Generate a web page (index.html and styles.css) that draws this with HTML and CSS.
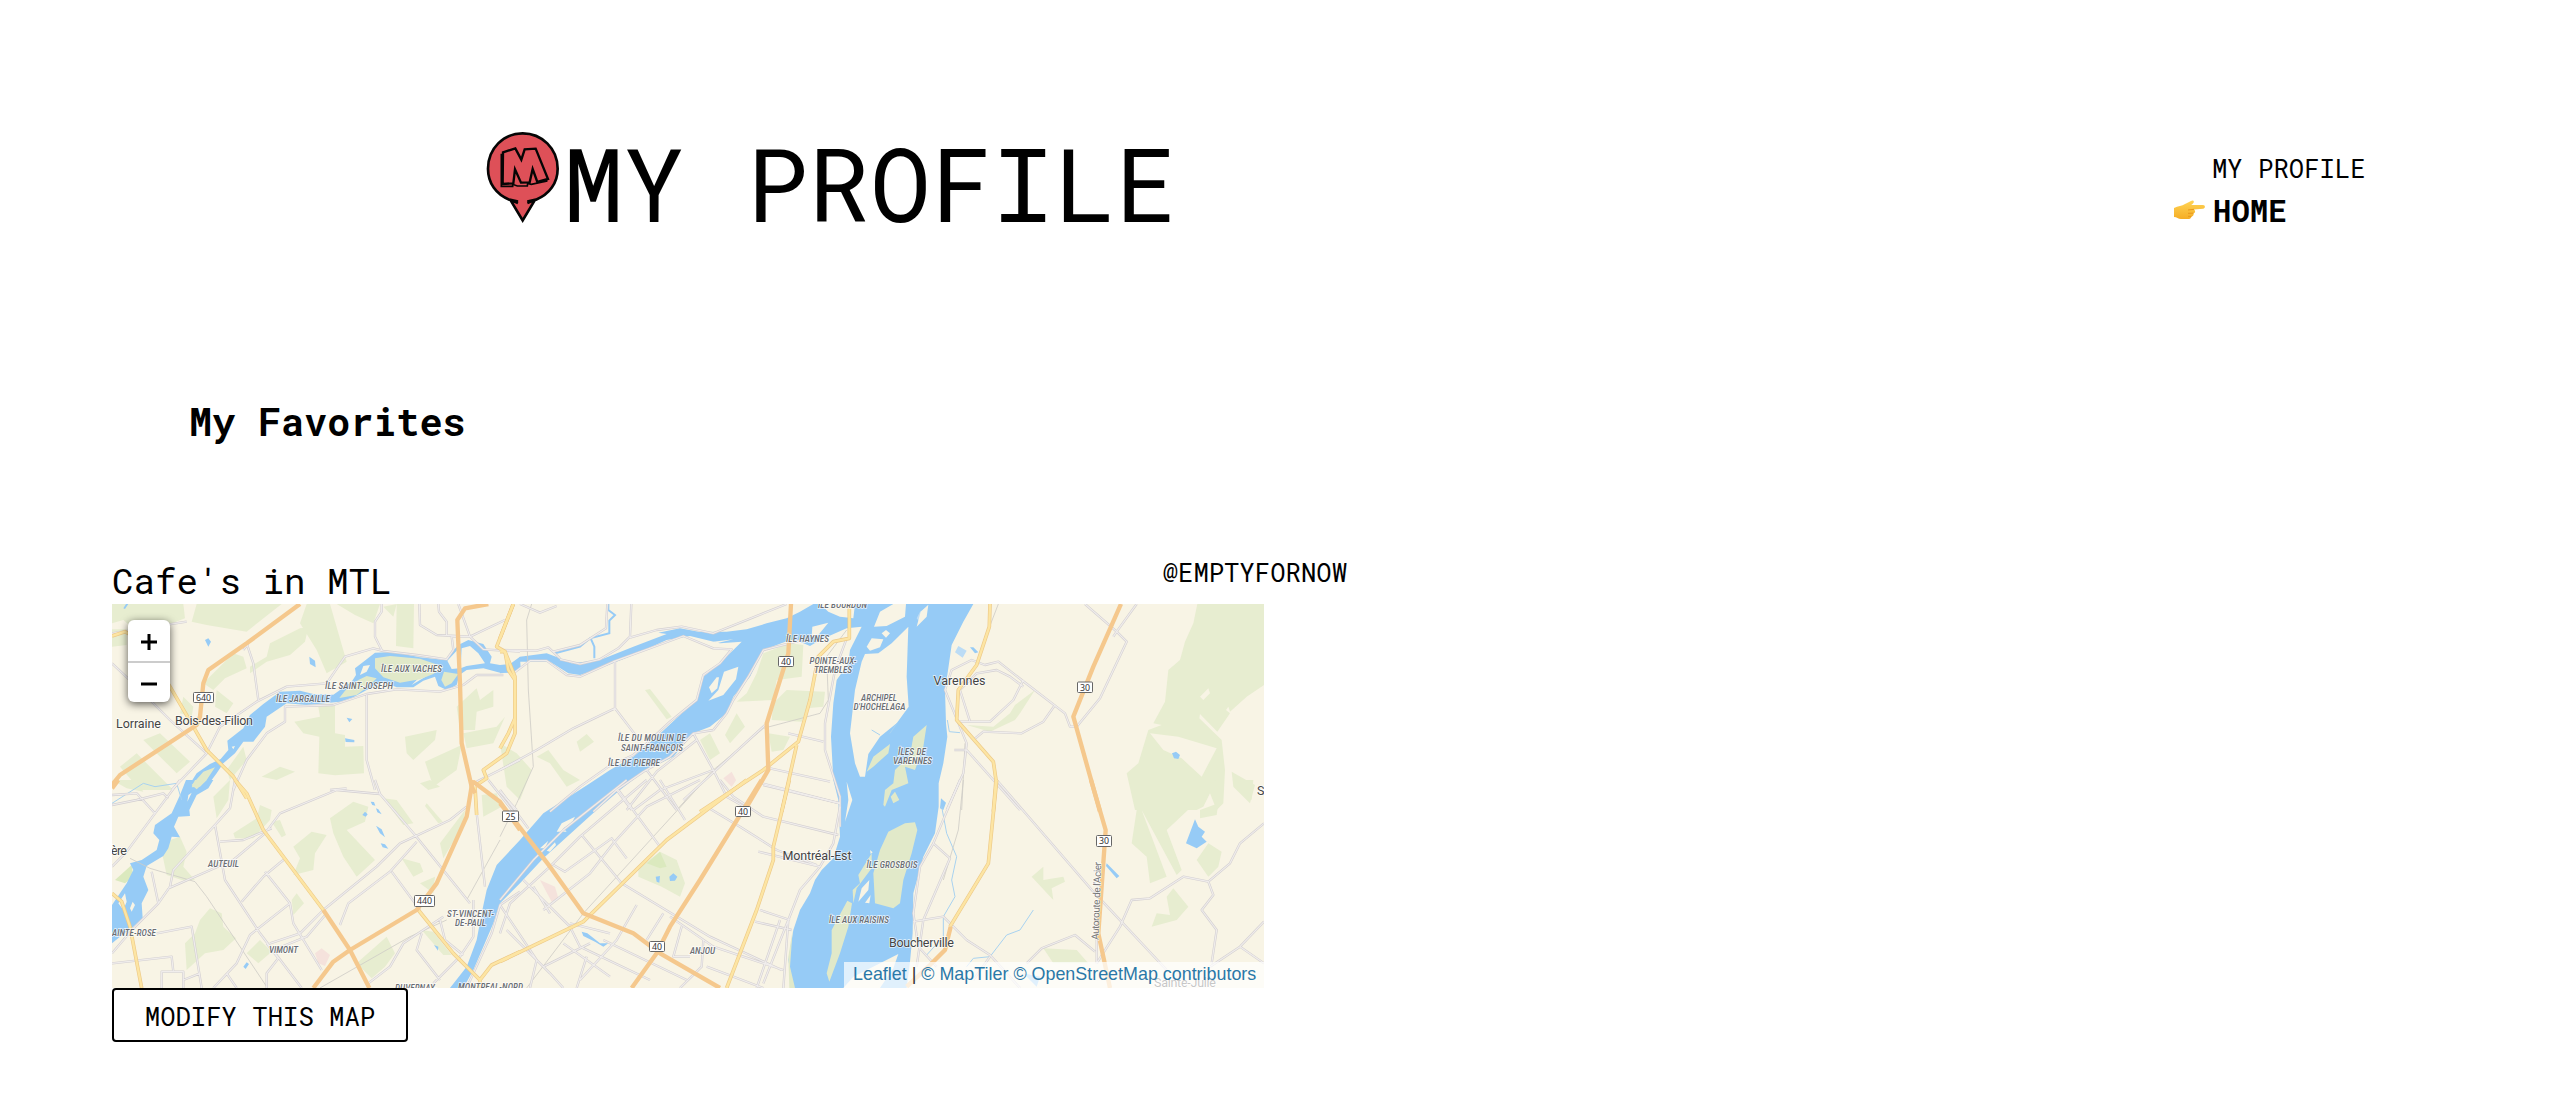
FILE: index.html
```html
<!DOCTYPE html>
<html lang="en">
<head>
<meta charset="utf-8">
<title>My Profile</title>
<link rel="stylesheet" href="styles.css">
</head>
<body>
<header class="header">
  <div class="brand">
    <svg class="logo" viewBox="0 0 90 105" aria-hidden="true">
      <g transform="scale(.3333)" stroke="#050505" stroke-linejoin="miter">
        <path d="M89 226 A105 105 0 1 1 167 226 L128 291Z" fill="#de5058" stroke="none"/>
        <path d="M114 230 L88 224 C48 208 24 174 24 131 C24 70 71 25 128 25 C185 25 233 70 233 131 C233 174 208 208 168 224 L142 230 M92 226 L128 286 L164 226 M92 225 L114 234 M164 225 L142 234" fill="none" stroke-width="8"/>
        <path d="M64 86 L64 184 L98 184 L98 178 L112 183 L142 183 L143 175 L154 178 L200 168 L199 160" fill="none" stroke-width="5"/>
        <path d="M69 82 L106 70 L124 104 L134 73 L167 71 L204 162 L172 171 L158 132 L149 172 L123 173 L105 133 L100 175 L68 177Z" fill="#de5058" stroke-width="7"/>
      </g>
    </svg>
    <h1 class="title">MY PROFILE</h1>
  </div>
  <nav class="nav">
    <a class="nav-link">MY PROFILE</a>
    <a class="nav-link nav-home">
      <svg class="hand" viewBox="0 0 31 20" aria-hidden="true">
        <defs><linearGradient id="skin" x1="0" y1="0" x2="0" y2="1"><stop offset="0" stop-color="#ffd455"/><stop offset="1" stop-color="#f5ad25"/></linearGradient></defs>
        <path d="M0 8 C4 6 8 6 11 4 C14 3 17 0 19 .5 C21 1.500 19 4 17 5 L29 5 C31.500 5 31.500 8.500 29 8.700 L20 9.500 C22 11 21 13 19.500 13.200 C20 15 19 16.500 17.500 16.500 C17 18.500 16 19 14 19 L7 19 C4 19 3 17 0 17 Z" fill="url(#skin)"/>
        <path d="M20 9.300 L14 10 M19.500 13.200 L14 13.300 M17.500 16.400 L14 16.300" stroke="#e8981c" fill="none"/>
      </svg>
      <span>HOME</span>
    </a>
  </nav>
</header>
<main class="main">
  <h2 class="favorites">My Favorites</h2>
  <section class="entry">
    <div class="entry-head">
      <h3 class="entry-name">Cafe's in MTL</h3>
      <span class="entry-user">@EMPTYFORNOW</span>
    </div>
    <div class="map">
      <svg class="map-tiles" viewBox="112 604 1152 384">
        <g class="wood">
          <g class="ta">
            <path d="M36 192 L250 192 L255 235 L190 260 L150 255 L95 262 L70 240 L36 250Z M290 192 L545 192 L440 275 L320 255 L275 245Z M620 192 L690 192 L740 365 L680 400 L650 330 L600 250Z M710 192 L840 192 L820 250 L765 225Z M890 192 L942 192 L940 325 L888 318Z M36 268 L80 268 L80 315 L36 320Z"/>
            <path d="M450 380 L500 350 L510 310 L600 265 L625 262 L615 305 L570 345 L500 365 L450 400Z M310 430 L400 340 L430 350 L440 385 L375 415 L340 450Z M250 470 L280 500 L275 530 L240 520Z M350 450 L400 490 L380 520 L345 500Z"/>
            <path d="M583 545 L660 530 L655 500 L705 495 L705 580 L735 585 L735 620 L790 618 L792 700 L705 706 L655 700 L658 590 L610 580Z M130 600 L180 580 L270 665 L230 700Z M60 680 L110 640 L220 750 L120 750Z M380 690 L430 620 L440 660 L390 720Z"/>
            <path d="M1070 500 L1130 445 L1140 480 L1180 450 L1180 500 L1130 515 L1125 570 L1080 570Z M915 590 L1010 570 L1005 600 L940 660 L920 640Z M1090 580 L1190 560 L1215 530 L1180 610 L1100 625Z M975 665 L1085 615 L1070 690 L1000 740Z M485 710 L540 680 L585 695 L530 720Z M850 200 L890 192 L880 230Z"/>
          </g>
          <g class="tb"><path d="M740 310 L770 250 L790 190 L870 160 L910 165 L905 260 L830 270 L820 330 L710 335Z M820 340 L860 300 L975 305 L970 350 L920 355 L905 395 L815 390Z M675 435 L710 370 L735 410 L690 460Z M600 450 L630 430 L645 460 L660 490 L630 510Z M805 430 L870 440 L850 480 L815 485Z M0 460 L50 490 L95 540 L60 630 L20 590Z M435 300 L450 297 L515 380 L500 388Z M230 455 L260 432 L282 455 L240 485Z M110 500 L145 480 L190 540 L240 570 L200 590 L150 520Z"/></g>
          <g class="tc"><path d="M1012 42 L1212 42 L1212 285 L1160 320 L1110 365 L1105 350 L1098 360 L1110 370 L1072 425 L1020 372 L1018 385 L1085 450 L1095 540 L1090 640 L1070 660 L1050 610 L1030 650 L1010 660 L825 660 L800 550 L835 520 L865 420 L905 405 L880 400 L915 335 L925 240 L960 210 L975 155 L1000 100Z M1115 545 L1185 585 L1170 640 L1120 590Z"/><path class="keep" d="M1045 295 L1020 320 L1030 330 L1050 310Z M870 430 L955 440 L1070 475 L1025 560 L965 505 L910 480Z"/><path d="M320 405 L400 410 L450 370 L465 345 L525 300 L480 370 L465 390 L390 425Z"/></g>
          <g class="td">
            <path d="M36 0 L110 0 L130 35 L80 25Z M340 50 L390 0 L385 60 L350 115Z M400 160 L470 115 L480 75 L515 90 L510 120 L460 175 L405 175Z M180 190 L240 170 L260 215 L250 260 L285 300 L245 300 L200 285Z M285 460 L300 420 L330 385 L365 400 L370 440 L408 475 L370 510 L315 520 L260 570 L255 490Z M440 520 L480 480 L515 515 L475 550Z M575 360 L590 340 L612 370 L580 405Z"/>
            <path d="M580 200 L635 155 L680 165 L645 220 L640 270 L580 285 L600 235Z M690 115 L760 65 L805 80 L795 125 L740 150 L825 240 L770 290 L730 230 L700 160Z M850 55 L890 60 L940 130 L910 135Z M905 235 L960 250 L970 275 L940 290Z M1020 190 L1095 90 L1090 135 L1030 235Z M960 310 L1005 290 L1000 340Z M965 450 L1000 455 L1055 525 L1030 525Z M770 550 L860 470 L885 520 L855 560 L815 595Z M960 10 L990 0 L1020 20 L985 30Z M1145 45 L1190 40 L1205 80 L1150 110Z M980 70 L1028 125 L1015 130 L975 78Z M540 120 L558 165 L545 172 L515 125Z"/>
          </g>
          <g class="te"><path d="M415 265 L480 215 L530 240 L555 310 L540 350 L485 320 L415 290Z"/></g>
          <g class="tf"><path d="M1110 0 L1370 0 L1310 25 L1300 75 L1220 150 L1265 270 L1250 285 L1145 90 L1220 290 L1170 310 L1160 230 L1115 190 L1130 90Z M1320 90 L1375 70 L1370 105 L1320 115Z M1310 240 L1345 190 L1385 215 L1375 260 L1345 290Z M815 290 L850 260 L850 300 L910 290 L915 305 L875 325 L880 360Z M1175 440 L1190 400 L1230 405 L1220 350 L1240 325 L1285 380 L1250 420Z M850 505 L950 510 L985 550 L880 550Z M1420 0 L1475 60 L1480 0Z"/></g>
        </g>
        <g class="park"><path class="td" d="M45 300 L95 255 L100 290 L75 310Z"/><path class="te" d="M440 250 L480 215 L500 260 L480 265Z"/></g>
        <g class="clinic"><path class="tb" d="M670 565 L695 545 L708 570 L695 590Z"/><path class="td" d="M645 520 L665 505 L690 525 L675 558 L655 550Z"/><path class="te" d="M120 300 L165 320 L175 355 L155 365Z M680 0 L708 0 L695 20Z"/></g>
        <g class="water">
          <path class="ta" d="M258 750 L290 700 L330 672 L362 657 L385 630 L382 602 L430 565 L450 525 L490 492 L540 455 L600 452 L640 462 L700 464 L720 450 L755 425 L768 405 L765 385 L800 358 L825 338 L880 336 L960 352 L1035 360 L1075 315 L1105 300 L1150 312 L1175 350 L1170 370 L1230 380 L1260 350 L1262 385 L1245 398 L1200 398 L1150 385 L1100 390 L1078 405 L1070 435 L1040 450 L1015 438 L1005 410 L970 422 L940 442 L890 442 L850 425 L800 450 L760 472 L720 485 L620 495 L560 490 L500 530 L495 560 L460 605 L430 605 L405 640 L370 670 L350 700 L320 740 L315 750Z M315 300 L325 295 L333 305 L325 320Z M628 350 L645 362 L647 382 L630 372Z M740 533 L757 537 L748 547Z M735 595 L763 600 L763 607 L737 606Z M70 205 L78 192 L85 192 L75 207Z"/>
          <path class="td" d="M258 0 L240 45 L215 100 L165 135 L160 160 L178 180 L170 210 L125 240 L90 250 L100 270 L80 310 L36 375 L36 490 L60 470 L100 440 L128 415 L125 370 L145 330 L130 290 L140 258 L190 228 L205 205 L215 170 L240 172 L222 140 L235 110 L270 108 L268 90 L290 45 L325 25 L340 0Z M787 105 L795 95 L803 103 L797 110Z M812 65 L822 66 L826 77 L817 75Z M828 85 L835 88 L845 103 L832 97Z M828 137 L845 148 L855 172 L840 160Z M842 190 L855 193 L865 206 L848 202Z M430 560 L440 547 L447 552 L437 567Z M1002 495 L1015 500 L1014 512Z"/>
          <path class="tb" d="M940 42 L1420 42 L1390 95 L1355 165 L1345 235 L1335 300 L1338 400 L1342 440 L1330 520 L1316 580 L1316 650 L1305 730 L1270 800 L1240 910 L1238 1030 L1230 1115 L1220 1194 L880 1194 L865 1110 L880 1020 L900 960 L930 910 L945 870 L965 840 L1000 805 L1020 740 L1015 630 L1000 570 L993 440 L1000 340 L1010 270 L1045 220 L1050 180 L1085 110 L1040 115 L960 150 L930 168 L900 155 L870 150 L790 180 L750 260 L700 320 L680 370 L630 410 L580 430 L520 500 L430 545 L360 600 L290 660 L130 805 L60 880 L0 940 L-20 1000 L-50 1070 L-80 1140 L-110 1194 L-150 1194 L-100 1130 L-70 1050 L-55 970 L-40 900 L-10 825 L60 750 L130 670 L270 580 L330 540 L400 500 L470 440 L540 375 L590 330 L610 260 L660 220 L725 155 L660 160 L570 138 L500 150 L400 195 L300 235 L240 255 L205 250 L150 215 L60 215 L40 245 L0 250 L0 225 L30 222 L60 200 L140 190 L180 205 L215 220 L300 210 L400 170 L500 132 L475 128 L540 115 L600 126 L680 125 L740 118 L800 100 L860 85 L900 65Z"/>
          <path class="te" d="M245 455 L262 460 L300 490 L325 490 L310 500 L285 485 L250 468Z M508 290 L520 280 L532 290 L525 302 L510 303Z M467 290 L480 288 L478 308 L470 305Z"/>
          <path class="tc" d="M936 490 L948 485 L960 495 L955 507 L942 505Z M330 172 L340 172 L355 187 L345 190Z"/>
          <path class="tf" d="M1278 190 L1305 118 L1315 140 L1335 155 L1325 170 L1340 185 L1310 205Z M1040 250 L1078 288 L1070 295 L1038 258Z M543 55 L558 68 L550 90 L540 85Z M790 580 L840 590 L830 620Z"/>
        </g>
        <path class="stream tb" d="M325 42 L325 60 L345 75 L328 92 L328 130 L270 145 L240 170 L165 190 M272 145 L283 170 L283 205"/>
        <g class="shoal"><path class="tc" d="M295 168 L320 182 L308 203 L285 187Z M180 65 L195 55 L178 95 L170 85Z"/></g>
        <g class="land">
          <path class="ta" d="M1085 325 L1110 318 L1135 340 L1155 370 L1100 378 L1082 385Z M1042 362 L1072 330 L1078 385 L1055 387Z M935 435 L985 405 L960 410Z M395 620 L405 618 L400 628Z M780 405 L790 378 L810 375 L800 395Z"/>
          <path class="td" d="M90 385 L98 365 L105 375 L95 395Z M265 45 L275 38 L262 65Z M55 370 L75 340 L80 365 L70 390Z"/>
          <path class="tb" d="M625 332 L655 300 L672 245 L715 230 L708 268 L670 315Z M627 292 L650 262 L657 262 L652 295 L635 310Z M640 155 L700 148 L650 160Z M1225 110 L1220 260 L1226 350 L1190 400 L1140 440 L1105 492 L1095 560 L1080 560 L1065 520 L1050 430 L1065 300 L1085 215 L1095 192 L1135 190 L1175 160Z M1122 110 L1140 65 L1180 42 L1218 42 L1215 80 L1160 108Z M1100 170 L1115 145 L1150 148 L1140 172 L1110 182Z M1145 130 L1158 120 L1170 130 L1158 143Z M1250 110 L1262 65 L1285 44 L1280 80Z M960 42 L1065 42 L1060 85 L1020 80 L985 65Z M937 110 L985 98 L955 135 L935 140Z M945 165 L1045 122 L1050 160 L970 175Z M1040 575 L1057 630 L1035 695 L1045 630Z"/>
          <path class="te" d="M170 155 L185 130 L225 110 L215 130 L190 145 L200 155Z M120 205 L145 182 L135 205Z M140 212 L165 187 L168 195 L150 215Z M1075 365 L1085 325 L1108 300 L1105 330Z M1095 368 L1112 345 L1108 370Z M1110 210 L1118 217 L1112 222Z"/>
          <path class="tf" d="M250 624 L280 590 L415 522 L400 565 L360 624Z"/>
        </g>
        <g class="isle">
          <path class="ta" d="M825 355 L870 348 L960 356 L1030 380 L1000 402 L960 418 L900 428 L850 412 L825 385Z M775 420 L800 408 L830 415 L810 435 L770 465 L718 474 L735 452Z M1032 395 L1075 402 L1055 430 L1035 440 L1024 420Z M275 735 L310 695 L345 682 L320 720 L290 748Z"/>
          <path class="td" d="M275 22 L285 0 L320 0 L300 20Z"/>
          <path class="tc" d="M20 545 L40 500 L90 462 L85 490 L40 530Z M70 645 L75 600 L100 580 L105 540 L150 495 L160 440 L200 405 L190 470 L165 540 L135 530 L145 580 L95 600 L75 650Z M92 620 L105 605 L118 630 L100 640Z"/>
          <path class="tf" d="M345 370 L340 280 L360 210 L385 155 L435 130 L465 127 L472 150 L455 220 L430 300 L420 370 L400 385Z M300 310 L295 285 L335 220 L335 265 L290 325 L280 370 L278 330Z M215 450 L262 362 L276 370 L265 440 L240 520 L208 605 L200 580 L215 520Z M88 624 L85 530 L98 450 L90 560 L105 624Z"/>
        </g>
        <g class="creek"><path class="tf" d="M545 80 L560 160 L590 230 L575 300 L585 350 L550 410 L550 470 L500 525 M820 390 L780 450 L740 465 L690 530 L640 535 L620 560"/><path class="tc" d="M262 390 L268 425 L300 428"/><path class="td" d="M36 70 L130 10 L165 20 L230 10 L245 60"/><path class="tb" d="M1115 420 L1140 435 M1170 430 L1190 400"/></g>
        <g class="rail"><path class="tb" d="M95 42 L80 90 L85 300 L100 530 L50 640 L0 740 M530 660 L640 540 L790 415 L960 370 L985 330 L980 200 L1040 120"/><path class="td" d="M90 235 L150 265 L285 305 L320 350 L500 620 M660 624 L930 470 L1040 420 M1200 180 L1100 360"/><path class="te" d="M615 0 L460 170 L250 400 L80 624"/><path class="tf" d="M610 0 L595 150 L550 300"/><path class="tc" d="M415 42 L385 120 M315 460 L305 660"/></g>
        <g id="minor" class="minor">
          <path class="ta" d="M36 370 L110 440 L210 540 L320 640 M36 280 L130 265 L260 245 M440 310 L460 370 L475 480 M400 750 L440 660 L500 580 L555 545 L555 500 L700 495 L800 462 L890 448 L1020 455 L1090 435 L1130 405 L1210 405 M215 750 L320 640 L360 560 L470 485 L560 440 L680 430 L735 350 L820 325 L850 333 L950 345 L1040 358 L1060 330 L1055 290 L1110 290 L1215 240 M845 192 L845 215 L825 245 L825 290 L845 330 M800 465 L800 660 L825 750 M958 192 L960 255 L1010 285 L1110 290 M1015 192 L1017 215 L1040 245 L1040 285 M1075 192 L1110 290 L1150 328 L1260 335 M1130 725 L1260 660 M690 750 L740 745 M430 330 L445 310"/>
          <path class="tb" d="M0 180 L110 182 L145 172 L180 205 M60 42 L120 68 L170 48 M322 42 L318 115 L240 165 L160 185 M394 42 L390 140 L355 175 L300 208 L240 222 L180 208 M390 143 L470 120 L545 110 L640 130 L760 82 L860 42 M40 250 L90 212 L140 212 L200 255 L240 260 L340 215 L550 138 L640 175 L695 178 L660 220 L610 255 L590 330 L510 395 L440 460 L400 495 L325 530 L240 590 L150 665 M345 215 L345 355 L410 440 M345 355 L220 415 L110 480 L0 540 M0 605 L50 660 M640 420 L580 430 L510 500 L430 545 L350 600 L280 665 M900 152 L790 180 L745 260 L700 330 L680 370 L640 420 M580 430 L640 540 L680 620 L750 660 M590 450 L470 545 L380 660 M350 600 L395 660 M440 540 L530 660 M640 540 L480 600 L400 660 M795 405 L790 410 L550 630 M865 430 L970 455 M810 535 L990 575 M785 580 L1020 640 M1040 145 L1005 240 L975 400 L975 480 L1020 620 L1020 710"/>
          <path class="tc" d="M675 42 L770 125 L800 155 L720 325 L650 410 L630 410 L615 370 L485 270 L415 215 L375 225 L335 210 L275 240 L255 300 L320 460 L310 550 L260 660 M830 42 L770 125 L760 140 M300 300 L350 250 L410 240 L450 260 L490 290 M490 270 L460 330 L390 395 L300 395 M300 300 L330 395 M585 345 L550 395 L485 430 L370 425 L340 450 M283 480 L320 480 L480 660"/>
          <path class="td" d="M240 0 L165 100 L80 215 L36 260 M36 45 L110 40 L165 100 M36 75 L110 60 L190 40 L205 55 M405 0 L390 85 L345 135 L220 270 L210 320 L175 370 L100 445 L36 520 M345 135 L375 300 L480 460 L605 624 M360 185 L430 180 L515 145 M155 275 L175 370 M205 325 L400 240 L495 160 L540 100 L710 30 L840 42 L945 165 L1110 370 M825 0 L840 42 M495 275 L570 370 L580 430 L665 570 M425 365 L490 290 L550 240 M570 370 L450 465 L410 550 L340 624 M510 490 L600 460 L670 390 L830 260 L900 190 L1050 120 L1100 80 M520 510 L620 470 L680 400 M720 435 L745 370 L870 275 L950 185 M875 275 L960 390 M170 460 L275 440 L305 624 M36 550 L215 530 L220 575 L185 575 L185 624 M220 575 L250 575 L250 600 L300 580 M250 600 L250 624 M380 580 L410 624 M500 624 L500 580 L535 535 L500 490 M805 610 L870 560 L910 490 L1030 410 M965 460 L950 510 L1020 600 M1020 420 L1035 480 L1090 525 M1165 0 L1260 120 M1130 100 L1155 320 M1120 360 L1120 470 L1080 530 L1000 610 M1260 335 L1200 375 L1175 460 L1100 624"/>
          <path class="te" d="M0 30 L85 145 M380 0 L190 150 L100 240 L0 360 M440 0 L240 170 L150 260 L30 370 L0 460 M355 30 L480 200 M480 0 L555 120 M160 255 L195 275 L335 175 L380 235 M600 0 L440 80 L340 190 L270 280 L130 390 M245 165 L365 310 L630 470 L845 570 M70 300 L210 440 M100 320 L150 400 M0 375 L110 540 L90 624 M20 450 L150 580 L190 624 M410 375 L350 480 L240 600 M490 400 L440 480 M510 410 L640 500 L850 570 M545 440 L520 530 L570 530 M610 480 L605 560 L540 624 M620 80 L720 140 L830 210 L950 255 M775 215 L960 260 L1000 190 L1020 80 M660 0 L700 50 L790 110 L1015 165 M790 15 L1020 70 M960 260 L900 330 L865 420 L850 624 M780 390 L870 420 M765 425 L875 450 M840 420 L770 624 M865 420 L790 610 M620 560 L790 624 M210 440 L240 500 L450 600 M190 490 L330 590 M260 530 L230 624 M310 480 L560 600 M330 460 L210 430 M130 560 L270 490"/>
          <path class="tf" d="M710 0 L1000 335 L1220 570 M600 0 L520 190 L480 260 L460 400 L475 500 L530 560 M520 190 L570 235 L490 420 L470 560 M460 425 L550 410 L620 480 L690 525 L780 624 M1512 130 L1440 190 L1410 250 L1345 305 L1270 290 L1170 355 L1115 360 L1080 440 L1010 550 M1345 305 L1360 345 L1325 390 L1370 450 L1355 550 M1512 425 L1440 500 L1350 560 M1440 500 L1512 550 M800 550 L845 505 L945 465 L1005 515 M1010 440 L1010 550 M690 530 L640 600"/>
        </g>
        <use href="#minor" class="minor-in"/>
        <g id="major" class="major">
          <path class="ta" d="M36 288 L75 275 L120 300 L210 440 L280 560 L320 630 L400 710 L440 775 M1240 192 L1190 320 L1215 335 L1245 410 L1245 580 L1220 640 L1150 690 L1160 715 L1130 735"/>
          <path class="tb" d="M40 42 L0 145 M0 185 L15 185 L25 240 L45 270 L45 385 L25 430 L0 475 M1048 42 L1048 145 L1000 155 L955 200 L930 330 L895 455 L790 540 L600 665 M890 465 L845 665"/>
          <path class="tc" d="M390 42 L388 110 L350 225 L295 300 L290 390 L400 515 L408 570 L400 665"/>
          <path class="td" d="M405 0 L440 40 L490 150 L670 390 M36 340 L65 365 L90 440 L125 624 M955 390 L1060 520 L1140 600 L1175 555 L1260 515 M1140 600 L1140 624 M1125 20 L1130 105"/>
          <path class="te" d="M0 545 L250 425 L500 180 L740 0 M868 0 L820 200 L820 240 L770 390 L680 624"/>
          <path class="tf" d="M710 0 L685 250 L570 440"/>
        </g>
        <use href="#major" class="major-in"/>
        <g class="motorway">
          <path class="ta" d="M600 192 L440 310 L325 390 L310 430 L300 530 L290 555 L60 705 L36 735 M1165 192 L1095 205 L1072 240 L1080 430 L1085 610 L1115 740 L1125 760"/>
          <path class="tb" d="M873 42 L865 190 L800 400 L805 540 L735 660"/>
          <path class="tc" d="M783 42 L700 230 L640 380 L720 665"/>
          <path class="td" d="M36 25 L55 0 M670 390 L750 510 L808 624 M640 624 L700 545 L750 510 L950 390 L1010 310 L1100 110 L1118 0 M1120 5 L1200 65 L1260 150"/>
          <path class="te" d="M0 70 L50 130 L150 260 L250 400 L400 460 L480 520 L660 624 M785 0 L600 300 L510 440 L470 520 L395 624"/>
          <path class="tf" d="M993 0 L1037 150 L1015 460 L1050 624 M572 440 L555 510 L510 555 L440 620"/>
        </g>
        <g class="place">
          <text x="116" y="727.500" textLength="45">Lorraine</text><text x="175" y="725" textLength="78">Bois-des-Filion</text><text x="933.500" y="684.500" textLength="52">Varennes</text><text x="111" y="855" textLength="16">ère</text><text x="782.500" y="860" textLength="69">Montréal-Est</text><text x="889" y="946.500" textLength="65">Boucherville</text><text x="1257" y="795">S</text><text x="1154" y="986.500" textLength="62">Sainte-Julie</text>
        </g>
        <g class="area">
          <text x="276" y="702" textLength="54">ÎLE JARGAILLE</text><text x="325" y="688.700" textLength="68">ÎLE SAINT-JOSEPH</text><text x="381" y="672" textLength="61">ÎLE AUX VACHES</text><text x="818" y="607.500" textLength="49">ÎLE BOURDON</text><text x="786" y="642" textLength="43">ÎLE HAYNES</text><text x="809.500" y="663.500" textLength="47">POINTE-AUX-</text><text x="814" y="673" textLength="38">TREMBLES</text><text x="861" y="700.500" textLength="36">ARCHIPEL</text><text x="853.500" y="710" textLength="52">D'HOCHELAGA</text><text x="898" y="754.500" textLength="28">ÎLES DE</text><text x="893" y="764" textLength="39">VARENNES</text><text x="618" y="741" textLength="68">ÎLE DU MOULIN DE</text><text x="621" y="750.500" textLength="62">SAINT-FRANÇOIS</text><text x="608" y="766" textLength="52">ÎLE DE PIERRE</text><text x="208" y="866.500" textLength="31">AUTEUIL</text><text x="112" y="936" textLength="44">AINTE-ROSE</text><text x="269" y="953" textLength="29">VIMONT</text><text x="395" y="991" textLength="42">DUVERNAY-</text><text x="458" y="990" textLength="65">MONTREAL-NORD</text><text x="447" y="916.500" textLength="47">ST-VINCENT-</text><text x="455" y="926" textLength="31">DE-PAUL</text><text x="866.500" y="867.500" textLength="51">ÎLE GROSBOIS</text><text x="829" y="922.500" textLength="60">ÎLE AUX RAISINS</text><text x="690" y="953.500" textLength="25">ANJOU</text>
        </g>
        <text class="road-name" transform="translate(1098.500 940) rotate(-88)" textLength="78">Autoroute de l'Acier</text>
        <g class="shield">
          <rect x="193.500" y="692.500" width="20" height="10" rx="1"/><rect x="778.500" y="656.500" width="15" height="10" rx="1"/><rect x="1077.500" y="682" width="15" height="10.500" rx="1"/><rect x="502.500" y="811" width="16" height="10.500" rx="1"/><rect x="414.500" y="895.500" width="20" height="11" rx="1"/><rect x="735.500" y="806.500" width="15" height="10" rx="1"/><rect x="649.500" y="941.500" width="15" height="10" rx="1"/><rect x="1096.500" y="835.500" width="15" height="11" rx="1"/>
          <text x="203.500" y="700.700">640</text><text x="786" y="664.700">40</text><text x="1085" y="690.500">30</text><text x="510.500" y="819.500">25</text><text x="424.500" y="904.200">440</text><text x="743" y="814.700">40</text><text x="657" y="949.700">40</text><text x="1104" y="844.200">30</text>
        </g>
      </svg>
      <div class="zoom-control">
        <span class="zoom-button"><svg viewBox="0 0 16 16"><path d="M0 8H16M8 0V16"/></svg></span>
        <span class="zoom-button"><svg viewBox="0 0 16 16"><path d="M0 8H16"/></svg></span>
      </div>
      <div class="attribution"><a>Leaflet</a> | <a>© MapTiler</a> <a>© OpenStreetMap contributors</a></div>
    </div>
    <button class="modify">MODIFY THIS MAP</button>
  </section>
</main>
</body>
</html>
```
FILE: styles.css
```css
* { box-sizing: border-box; }
body {
  margin: 0;
  background: #fff;
  color: #000;
  font-family: "Roboto Mono", "DejaVu Sans Mono", monospace;
}
h1, h2, h3 { margin: 0; font-weight: 400; }

.header {
  display: flex;
  justify-content: space-between;
  align-items: flex-start;
  padding: 115px 202px 0 480px;
  height: 396px;
}
.brand { display: flex; align-items: flex-start; }
.logo { width: 90px; height: 105px; margin-top: 10px; margin-right: -7.5px; }
.title { font-size: 102.4px; line-height: 136px; }
.nav { display: flex; flex-direction: column; gap: 4px; padding-top: 36px; width: 192px; }
.nav-link { font-size: 25.6px; line-height: 34px; padding-left: 38px; white-space: nowrap; }
.nav-home { display: flex; align-items: center; padding-left: 0; font-size: 30.72px; line-height: 42px; font-weight: 700; }
.hand { width: 31px; height: 20px; margin-right: 8px; }

.favorites { padding-left: 189px; font-size: 38.4px; line-height: 50px; font-weight: 700; }
.entry { width: 1235px; margin: 109px 0 0 112px; }
.entry-head { display: flex; justify-content: space-between; align-items: flex-start; height: 49px; }
.entry-name { font-size: 35.84px; line-height: 46px; padding-top: 2px; }
.entry-user { font-size: 25.6px; line-height: 34px; }

.map { position: relative; width: 1152px; height: 384px; overflow: hidden; background: #f8f4e5; }
.map-tiles { display: block; width: 1152px; height: 384px; }
.modify {
  display: block;
  width: 296px;
  height: 54px;
  padding: 2px 0 0;
  border: 2px solid #000;
  border-radius: 4px;
  background: #fff;
  color: #000;
  font: 25.6px/34px "Roboto Mono", "DejaVu Sans Mono", monospace;
}

.zoom-control {
  position: absolute;
  left: 16px;
  top: 16px;
  width: 42px;
  border-radius: 6px;
  background: #fff;
  box-shadow: 0 2px 8px rgba(0, 0, 0, .65);
}
.zoom-button { display: flex; align-items: center; justify-content: center; height: 41px; padding-top: 3px; }
.zoom-button + .zoom-button { border-top: 2px solid #ccc; }
.zoom-button svg { width: 16px; height: 16px; fill: none; stroke: #000; stroke-width: 3; }
.attribution {
  position: absolute;
  right: 0;
  bottom: 0;
  width: 420px;
  height: 26px;
  padding-left: 9px;
  background: rgba(255, 255, 255, .7);
  color: #333;
  font: 17.9px/25px "Liberation Sans", sans-serif;
  white-space: nowrap;
}
.attribution a { color: #2a78a8; }

/* map sheets, drawn at three units per pixel */
.ta { transform: translate(100px, 540px) scale(.33333); }
.tb { transform: translate(500px, 590px) scale(.33333); }
.tc { transform: translate(860px, 590px) scale(.33333); }
.td { transform: translate(100px, 780px) scale(.33333); }
.te { transform: translate(500px, 780px) scale(.33333); }
.tf { transform: translate(760px, 780px) scale(.33333); }

.wood { fill: #e7edd0; }
.keep, .land { fill: #f8f4e5; }
.park { fill: #dbe9be; }
.clinic { fill: #f5e2dc; }
.water { fill: #96cbf6; }
.stream { fill: none; stroke: #96cbf6; stroke-width: 6; }
.shoal { fill: #bcdcf5; }
.isle { fill: #e1e9c9; }
.creek { fill: none; stroke: #a8d2f0; stroke-width: 3; }
.rail { fill: none; stroke: #cfccc6; stroke-width: 2.5; }
.minor { fill: none; stroke-linejoin: round; }
#minor { stroke: var(--line, #d3cfd1); stroke-width: var(--width, 7px); }
.minor-in { --line: #f0edec; --width: 3.5px; }
.major { fill: none; stroke-linejoin: round; }
#major { stroke: var(--edge, #edca89); stroke-width: var(--size, 11px); }
.major-in { --edge: #fde5a3; --size: 7px; }
.motorway { fill: none; stroke: #f5c88d; stroke-width: 13; stroke-linejoin: round; }
.place, .area, .road-name { paint-order: stroke; stroke: rgba(255, 255, 255, .75); stroke-width: 1.5px; }
.place { font: 12.5px Roboto, sans-serif; fill: #444; }
.area { font: italic 500 9.2px "Roboto Condensed", Roboto, sans-serif; fill: #6b6e74; }
.road-name { font: 10px Roboto, sans-serif; fill: #777; }
.shield rect { fill: #fff; stroke: #666; stroke-width: 1; }
.shield text { font: 8.8px "Noto Sans", sans-serif; fill: #333; text-anchor: middle; }
```
